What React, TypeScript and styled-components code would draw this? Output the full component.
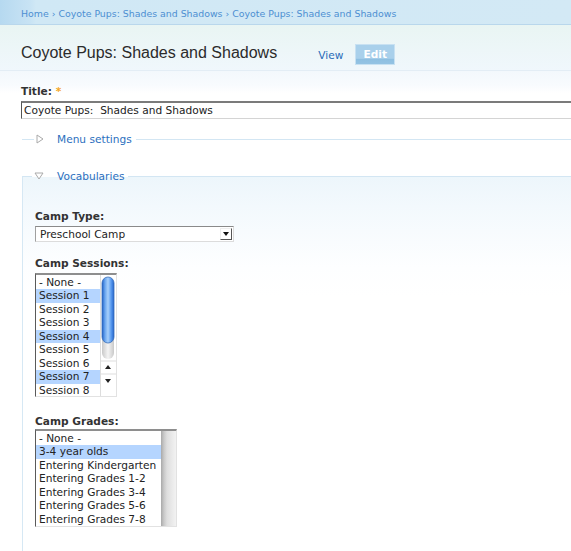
import React from 'react';
import styled, { createGlobalStyle } from 'styled-components';

const GlobalStyle = createGlobalStyle`
  body {
    margin: 0;
    background: #fff;
    font-family: "DejaVu Sans", Verdana, sans-serif;
    color: #333;
  }
`;

const Page = styled.div`
  width: 571px;
  height: 551px;
  overflow: hidden;
`;

const Breadcrumb = styled.div`
  height: 24px;
  border-bottom: 1px solid #b9d7ec;
  background: linear-gradient(to right, #b6d9f0 0, #c8e3f4 30px, #d0e8f5 36px, #d3e9f5 100%);
  padding-left: 21px;
  font-size: 9.4px;
  line-height: 27px;
  color: #4d8fd2;
  white-space: nowrap;
`;

const Header = styled.div`
  height: 46px;
  box-sizing: border-box;
  display: flex;
  align-items: center;
  padding: 10px 0 0 21px;
  background: linear-gradient(#e9f5f3, #f0f7fc);
  border-bottom: 1px solid #e3edf5;
`;

const PageTitle = styled.h1`
  margin: 0;
  font-family: "Liberation Sans", Arial, sans-serif;
  font-weight: normal;
  font-size: 16px;
  color: #2b2b2b;
`;

const Tabs = styled.div`
  display: flex;
  align-items: center;
  margin: 4px 0 0 41px;
  gap: 12px;
`;

const TabLink = styled.span`
  font-size: 10.6px;
  color: #2a6cb8;
`;

const ActiveTab = styled.span`
  width: 40px;
  height: 21px;
  box-sizing: border-box;
  border: 1px solid #c8e1f2;
  background: linear-gradient(#a9d0eb 0, #a9d0eb 70%, #8ebfe1 75%, #94c3e3 100%);
  color: #fff;
  font-size: 10.6px;
  font-weight: bold;
  text-align: center;
  line-height: 19px;
`;

const Content = styled.div`
  padding: 13px 0 60px 21px;
  background: linear-gradient(#f3f8fc 0, #f8fbfe 14px, #fff 22px);
`;

const Label = styled.div<{ $top?: number }>`
  font-size: 10.6px;
  font-weight: bold;
  line-height: 14px;
  color: #333;
  margin-top: ${p => p.$top ?? 0}px;
`;

const Required = styled.span`
  color: #f5a623;
`;

const TextInput = styled.div`
  margin-top: 3px;
  height: 18px;
  width: 600px;
  box-sizing: border-box;
  border: 1px solid #d4d4d4;
  border-top: 2px solid #7b7b7b;
  border-left: 1px solid #555;
  padding-left: 2px;
  font-size: 10.6px;
  line-height: 15px;
  color: #222;
  white-space: pre;
`;

const Fieldset = styled.fieldset<{ $open?: boolean }>`
  margin: ${p => (p.$open ? '17px 0 0 1px' : '10px 0 0 1px')};
  padding: ${p => (p.$open ? '23px 0 0 12px' : '0')};
  border: none;
  border-top: 1px solid #d3e6f3;
  border-left: ${p => (p.$open ? '1px solid #d6e8f4' : 'none')};
  min-height: ${p => (p.$open ? '400px' : '0')};
  background: ${p =>
    p.$open ? 'linear-gradient(#edf6fb 0, #f3f9fd 30px, #fdfeff 90px, #fff 120px)' : 'transparent'};
`;

const Legend = styled.legend<{ $offset: number }>`
  margin-left: ${p => p.$offset}px;
  padding: 0 4px 0 2px;
  font-size: 10.6px;
  line-height: 20px;
  color: #2c6fbe;
  display: flex;
  align-items: center;
  gap: 13px;
`;

const SelectBox = styled.div`
  margin-top: 3px;
  width: 199px;
  height: 16px;
  box-sizing: border-box;
  border: 1px solid #dcdcdc;
  border-top: 1px solid #8a8a8a;
  border-left: 1px solid #a0a0a0;
  background: #fff;
  display: flex;
  align-items: center;
  justify-content: space-between;
  padding-left: 4px;
  font-size: 10.6px;
  color: #222;
`;

const SelectArrow = styled.span`
  width: 12px;
  height: 12px;
  margin-right: 1px;
  box-sizing: border-box;
  border-right: 1px solid #555;
  border-bottom: 1px solid #555;
  border-top: 1px solid #eee;
  border-left: 1px solid #eee;
  display: flex;
  align-items: center;
  justify-content: center;
`;

const ListBox = styled.div<{ $width: number; $height: number; $top: number }>`
  margin-top: ${p => p.$top}px;
  width: ${p => p.$width}px;
  height: ${p => p.$height}px;
  box-sizing: border-box;
  border: 1px solid #e2e2e2;
  border-top: 2px solid #8e8e8e;
  border-left: 1px solid #5a5a5a;
  background: #fff;
  display: flex;
  overflow: hidden;
`;

const Options = styled.div`
  flex: 1;
  padding-top: 1px;
`;

const Option = styled.div<{ $selected?: boolean }>`
  height: 13.45px;
  line-height: 13.45px;
  padding-left: 3px;
  font-size: 10.6px;
  color: #222;
  white-space: nowrap;
  background: ${p => (p.$selected ? '#b5d5ff' : 'transparent')};
`;

const GreyTrack = styled.div`
  width: 15px;
  background: linear-gradient(to right, #a9a9a9 0, #c9c9c9 3px, #dedede 6px, #ececec 12px, #f2f2f2 100%);
`;

const RightTri = () => (
  <svg width="8" height="10" viewBox="0 0 8 10">
    <path d="M1 1 L7 5 L1 9 Z" fill="#fff" stroke="#aaa" strokeWidth="1" />
  </svg>
);

const DownTri = () => (
  <svg width="10" height="8" viewBox="0 0 10 8">
    <path d="M1 1 L9 1 L5 7 Z" fill="#fff" stroke="#aaa" strokeWidth="1" />
  </svg>
);

const AquaScrollbar = () => (
  <svg width="16" height="121" viewBox="0 0 16 121">
    <defs>
      <linearGradient id="thumb" x1="0" x2="1" y1="0" y2="0">
        <stop offset="0" stopColor="#1d5fc8" />
        <stop offset="0.25" stopColor="#6aa6ef" />
        <stop offset="0.5" stopColor="#a8d0fb" />
        <stop offset="0.75" stopColor="#5b9cf0" />
        <stop offset="1" stopColor="#2364cc" />
      </linearGradient>
      <linearGradient id="cap" x1="0" x2="1" y1="0" y2="0">
        <stop offset="0" stopColor="#c9c9c9" />
        <stop offset="0.5" stopColor="#f4f4f4" />
        <stop offset="1" stopColor="#c9c9c9" />
      </linearGradient>
    </defs>
    <rect x="0" y="0" width="16" height="121" fill="#fff" />
    <line x1="0.5" y1="0" x2="0.5" y2="121" stroke="#ddd" />
    <rect x="2" y="58" width="12" height="26" rx="6" fill="url(#cap)" />
    <rect x="2" y="2" width="12" height="66" rx="6" fill="url(#thumb)" stroke="#3a6fb8" strokeWidth="0.8" />
    <line x1="1" y1="86" x2="16" y2="86" stroke="#ddd" />
    <path d="M5 94 L8 90 L11 94 Z" fill="#222" />
    <line x1="1" y1="99" x2="16" y2="99" stroke="#ddd" />
    <path d="M5 104 L8 108 L11 104 Z" fill="#222" />
  </svg>
);

const sessions = ['- None -', 'Session 1', 'Session 2', 'Session 3', 'Session 4', 'Session 5', 'Session 6', 'Session 7', 'Session 8'];
const selectedSessions = ['Session 1', 'Session 4', 'Session 7'];

const grades = [
  '- None -',
  '3-4 year olds',
  'Entering Kindergarten',
  'Entering Grades 1-2',
  'Entering Grades 3-4',
  'Entering Grades 5-6',
  'Entering Grades 7-8',
];

const App: React.FC = () => {
  return (
    <Page>
      <GlobalStyle />
      <Breadcrumb>
        Home › Coyote Pups: Shades and Shadows › Coyote Pups: Shades and Shadows
      </Breadcrumb>
      <Header>
        <PageTitle>Coyote Pups: Shades and Shadows</PageTitle>
        <Tabs>
          <TabLink>View</TabLink>
          <ActiveTab>Edit</ActiveTab>
        </Tabs>
      </Header>
      <Content>
        <Label>
          Title: <Required>*</Required>
        </Label>
        <TextInput>Coyote Pups:  Shades and Shadows</TextInput>

        <Fieldset>
          <Legend $offset={12}>
            <RightTri />
            Menu settings
          </Legend>
        </Fieldset>

        <Fieldset $open>
          <Legend $offset={-3}>
            <DownTri />
            Vocabularies
          </Legend>

          <Label>Camp Type:</Label>
          <SelectBox>
            Preschool Camp
            <SelectArrow>
              <svg width="6" height="4" viewBox="0 0 6 4">
                <path d="M0 0 L6 0 L3 4 Z" fill="#111" />
              </svg>
            </SelectArrow>
          </SelectBox>

          <Label $top={14}>Camp Sessions:</Label>
          <ListBox $width={82} $height={124} $top={3}>
            <Options>
              {sessions.map(s => (
                <Option key={s} $selected={selectedSessions.includes(s)}>
                  {s}
                </Option>
              ))}
            </Options>
            <AquaScrollbar />
          </ListBox>

          <Label $top={17}>Camp Grades:</Label>
          <ListBox $width={142} $height={98} $top={1}>
            <Options>
              {grades.map(g => (
                <Option key={g} $selected={g === '3-4 year olds'}>
                  {g}
                </Option>
              ))}
            </Options>
            <GreyTrack />
          </ListBox>
        </Fieldset>
      </Content>
    </Page>
  );
};

export default App;
